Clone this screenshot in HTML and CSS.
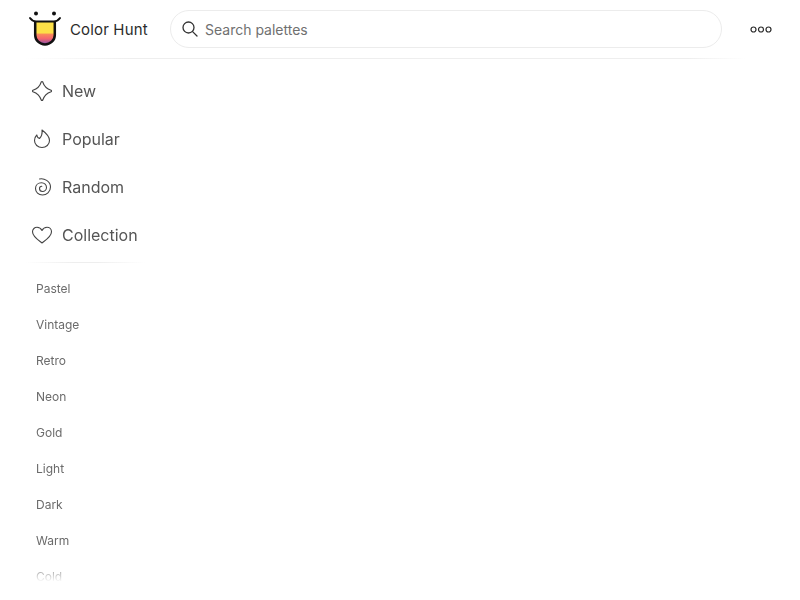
FILE: index.html
```html
<!DOCTYPE html>
<html lang="en">
<head>
<meta charset="utf-8">
<title>Color Hunt</title>
<link rel="stylesheet" href="styles.css">
</head>
<body>
<header class="header">
  <a class="brand">
    <svg class="logo" width="34" height="36" viewBox="0 0 34 36">
      <defs>
        <linearGradient id="tongue" x1="0" y1="0" x2="0" y2="1">
          <stop offset="0" stop-color="#fde047"/>
          <stop offset="0.5" stop-color="#fde047"/>
          <stop offset="0.55" stop-color="#fb8a5a"/>
          <stop offset="0.75" stop-color="#f4656f"/>
          <stop offset="1" stop-color="#7c4fb0"/>
        </linearGradient>
      </defs>
      <circle cx="8" cy="2.500" r="2" fill="#111"/>
      <circle cx="26" cy="2.500" r="2" fill="#111"/>
      <path d="M7.200 10.500V24A9.800 9.500 0 0 0 26.800 24V10.500Z" fill="url(#tongue)"/>
      <path d="M7.200 10.500V24A9.800 9.500 0 0 0 26.800 24V10.500" fill="none" stroke="#111" stroke-width="2.500"/>
      <path d="M2 7Q4 10 8 10.500H26Q30 10 32 7" fill="none" stroke="#111" stroke-width="2" stroke-linecap="round"/>
    </svg>
    <span class="brand-name">Color Hunt</span>
  </a>
  <div class="search">
    <svg class="search-icon" width="16" height="16" viewBox="0 0 16 16" fill="none" stroke="#333" stroke-width="1.300" stroke-linecap="round"><circle cx="6.500" cy="6.500" r="5.500"/><path d="M10.600 10.600L15 15"/></svg>
    <span class="search-text">Search palettes</span>
  </div>
  <svg class="more" width="22" height="7" viewBox="0 0 22 7" fill="none" stroke="#2b2b2b" stroke-width="1.200"><circle cx="3.500" cy="3.500" r="2.500"/><circle cx="11" cy="3.500" r="2.500"/><circle cx="18.500" cy="3.500" r="2.500"/></svg>
</header>
<div class="rule rule-top"></div>
<nav class="side">
  <a class="item">
    <svg class="nav-icon" width="22" height="22" viewBox="0 0 22 22" fill="none" stroke="#444" stroke-width="1.200" stroke-linejoin="round"><path d="M10.300 1.900C10.600 1.400 11.400 1.400 11.700 1.900C13 6 16 9 20.100 10.300C20.600 10.600 20.600 11.400 20.100 11.700C16 13 13 16 11.700 20.100C11.400 20.600 10.600 20.600 10.300 20.100C9 16 6 13 1.900 11.700C1.400 11.400 1.400 10.600 1.900 10.300C6 9 9 6 10.300 1.900Z"/></svg>
    <span>New</span>
  </a>
  <a class="item">
    <svg class="nav-icon" width="22" height="22" viewBox="0 0 22 22" fill="none" stroke="#444" stroke-width="1.100" stroke-linecap="round" stroke-linejoin="round"><path d="M11 2C15 5 18.500 8.500 18.500 12.500C18.500 16.500 15.200 19.500 11 19.500C6.800 19.500 3.500 16.500 3.500 12.500C3.500 10.500 4.300 8.500 5.800 7C6 8.500 7 10 8.500 10.500C10 9 11.500 6 11 2Z"/></svg>
    <span>Popular</span>
  </a>
  <a class="item">
    <svg class="nav-icon" width="22" height="22" viewBox="0 0 22 22" fill="none" stroke="#444" stroke-width="1.100" stroke-linecap="round"><path d="M8.500 3C13 2 19.500 5 19.500 11C19.500 16 15.500 19 11.500 19C7.500 19 4.500 16 4.500 12.500C4.500 9 7.200 6.800 10.500 6.800C13.500 6.800 15.500 9 15.500 11.500C15.500 14 13.500 15.500 11.500 15.500C9.800 15.500 8.500 14.200 8.500 12.500C8.500 11.200 9.500 10.300 10.800 10.300"/></svg>
    <span>Random</span>
  </a>
  <a class="item">
    <svg class="nav-icon" width="22" height="22" viewBox="0 0 22 22" fill="none" stroke="#444" stroke-width="1.100" stroke-linejoin="round"><path d="M11 19C7 16 1.500 12.500 1.500 7.800C1.500 5 3.700 3.300 6 3.300C8 3.300 10 4.500 11 6.500C12 4.500 14 3.300 16 3.300C18.300 3.300 20.500 5 20.500 7.800C20.500 12.500 15 16 11 19Z"/></svg>
    <span>Collection</span>
  </a>
  <div class="rule rule-side"></div>
  <a class="tag">Pastel</a>
  <a class="tag">Vintage</a>
  <a class="tag">Retro</a>
  <a class="tag">Neon</a>
  <a class="tag">Gold</a>
  <a class="tag">Light</a>
  <a class="tag">Dark</a>
  <a class="tag">Warm</a>
  <a class="tag">Cold</a>
</nav>
</body>
</html>
```
FILE: styles.css
```css
html, body {
  margin: 0;
  height: 100%;
  overflow: hidden;
  background: #fff;
  font-family: Inter, "Liberation Sans", sans-serif;
}
.header {
  display: flex;
  align-items: center;
  height: 58px;
  padding: 0 28px;
  box-sizing: border-box;
}
.brand {
  display: flex;
  align-items: center;
  gap: 8px;
  width: 142px;
  flex: none;
}
.logo { flex: none; }
.brand-name {
  font-size: 15px;
  font-weight: 400;
  letter-spacing: 0.15px;
  color: #2b2b2b;
  white-space: nowrap;
}
.search {
  display: flex;
  align-items: center;
  gap: 7px;
  box-sizing: border-box;
  width: 552px;
  height: 38px;
  padding: 0 11px;
  border: 1px solid #ececec;
  border-radius: 19px;
  flex: none;
}
.search-icon { flex: none; }
.search-text {
  font-size: 14px;
  color: #707070;
}
.more {
  flex: none;
  margin-left: 28px;
}
.rule {
  height: 1px;
  flex: none;
}
.rule-top {
  margin: 0 54px 0 24px;
  background: linear-gradient(90deg, #fff, #eee 15%, #eee 92%, #fff);
}
.rule-side {
  width: 120px;
  margin: 3px 0 7px -6px;
  background: linear-gradient(90deg, #fff, #eee 40%, #eee 60%, #fff);
}
.side {
  display: flex;
  flex-direction: column;
  width: 150px;
  height: 515px;
  margin-top: 8px;
  padding-left: 31px;
  overflow: hidden;
  box-sizing: border-box;
  -webkit-mask-image: linear-gradient(#000 495px, transparent 515px);
  mask-image: linear-gradient(#000 495px, transparent 515px);
}
.nav-icon { flex: none; }
.item {
  display: flex;
  align-items: center;
  gap: 9px;
  height: 48px;
  flex: none;
  font-size: 16px;
  color: #555;
  white-space: nowrap;
}
.tag {
  display: flex;
  align-items: center;
  height: 36px;
  flex: none;
  padding-left: 5px;
  font-size: 12px;
  color: #6b6b6b;
}
```
